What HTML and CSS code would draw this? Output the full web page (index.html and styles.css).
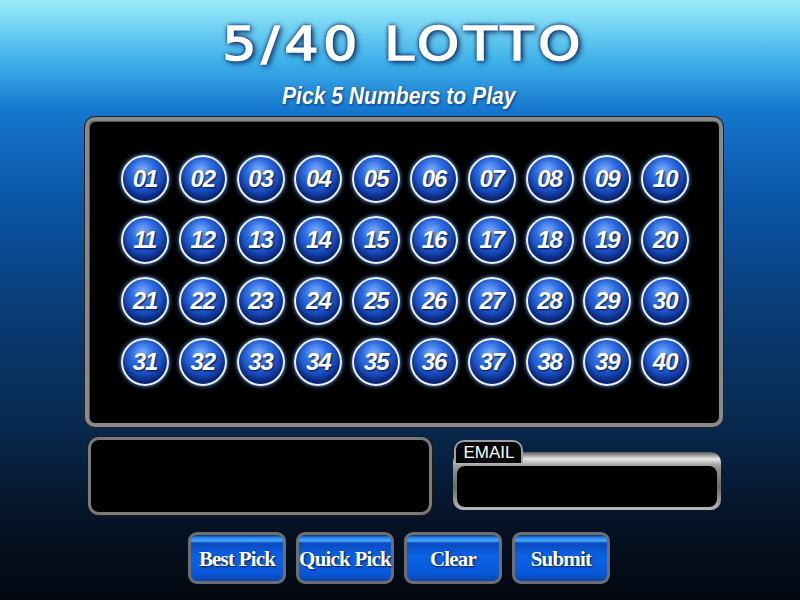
FILE: index.html
```html
<!DOCTYPE html>
<html lang="en">
<head>
    <meta charset="UTF-8">
    <title>5/40 Lotto</title>
    <link rel="stylesheet" href="styles.css">
</head>
<body>

<div class="page">
    <h1 class="title">5/40 LOTTO</h1>
    <h2 class="subtitle">Pick 5 Numbers to Play</h2>

    <!-- Number board -->
    <div class="board">
        <div id="balls" class="balls"></div>
    </div>

    <!-- Picks and email -->
    <div class="lower">
        <div class="picks"></div>
        <div class="email">
            <span class="email-tab">EMAIL</span>
            <div class="email-frame">
                <input type="text" class="email-input">
            </div>
        </div>
    </div>

    <!-- Buttons -->
    <div class="buttons">
        <button class="btn">Best Pick</button>
        <button class="btn">Quick Pick</button>
        <button class="btn">Clear</button>
        <button class="btn">Submit</button>
    </div>
</div>

<script>
    // Build the 40 number balls
    var balls = document.getElementById('balls');
    for (var i = 1; i <= 40; i++) {
        var b = document.createElement('div');
        b.className = 'ball';
        b.textContent = (i < 10 ? '0' : '') + i;
        b.onclick = function() { this.classList.toggle('picked'); };
        balls.appendChild(b);
    }
</script>

</body>
</html>
```

FILE: styles.css
```css
html, body {
    margin: 0;
    height: 100%;
}

body {
    font-family: "Liberation Sans", Arial, sans-serif;
    background: linear-gradient(to bottom, #9cecfa 0px, #3fb2ea 60px, #1677cf 110px, #0b55a6 200px, #0a3a72 320px, #082a50 420px, #061326 520px, #040810 600px);
    overflow: hidden;
}

.page {
    width: 800px;
    height: 600px;
    box-sizing: border-box;
    padding-left: 8px;
    display: flex;
    flex-direction: column;
    align-items: center;
}

/* Title */
.title {
    margin: 16px 0 0 0;
    height: 56px;
    font-family: "DejaVu Sans", sans-serif;
    font-weight: normal;
    font-size: 47px;
    letter-spacing: 4px;
    color: #fff;
    transform: scaleX(1.15);
    -webkit-text-stroke: 1.5px #fff;
    text-shadow: 0 0 2px #062a6a, 0 0 3px #062a6a, 0 0 5px #0a2e70, 2px 2px 6px #041c4a;
}

.subtitle {
    margin: 10px 0 0 -10px;
    font-size: 24px;
    font-style: italic;
    font-weight: bold;
    color: #fff;
    transform: scaleX(0.88);
    text-shadow: 1px 1px 3px #063070;
}

/* Board */
.board {
    margin-top: 7px;
    width: 638px;
    height: 310px;
    box-sizing: border-box;
    border: 4px solid #8a8a8a;
    border-radius: 10px;
    background: #000;
    box-shadow: 0 0 0 1px #222, inset 1px 1px 0 #555;
    padding: 34px 0 0 32px;
}

.balls {
    display: grid;
    grid-template-columns: repeat(10, 48px);
    column-gap: 9.8px;
    row-gap: 13px;
}

.ball {
    width: 48px;
    height: 48px;
    box-sizing: border-box;
    border-radius: 50%;
    border: 2px solid #e8f0ff;
    background: radial-gradient(circle at 45% 30%, #7fb0ff 0%, #2c6ae0 30%, #1548b8 60%, #0a2a80 100%);
    box-shadow: 0 0 4px #6aa0ff, inset 0 -4px 6px #0a2066;
    color: #fff;
    font-weight: bold;
    font-style: italic;
    font-size: 24px;
    letter-spacing: -1px;
    display: flex;
    align-items: center;
    justify-content: center;
    text-shadow: 1px 1px 2px #021038;
    cursor: pointer;
}

.ball.picked {
    background: radial-gradient(circle at 45% 30%, #ffe080 0%, #e0a020 50%, #905000 100%);
}

/* Lower row */
.lower {
    margin-top: 10px;
    width: 633px;
    display: flex;
    justify-content: space-between;
}

.picks {
    width: 344px;
    height: 78px;
    box-sizing: border-box;
    border: 3px solid #7a7a7a;
    border-radius: 11px;
    background: #000;
    box-shadow: 0 0 0 1px #1a1a1a;
}

.email {
    width: 268px;
    margin-top: 3px;
    display: flex;
    flex-direction: column;
    align-items: flex-start;
}

.email-tab {
    position: relative;
    z-index: 1;
    margin-left: 1px;
    height: 21px;
    padding: 0 6px 0 8px;
    background: #050505;
    border: 2px solid #a0a0a0;
    border-bottom: none;
    border-radius: 10px 10px 0 0;
    color: #fff;
    font-size: 17px;
    line-height: 22px;
}

.email-frame {
    width: 100%;
    box-sizing: border-box;
    margin-top: -11px;
    padding: 14px 4px 3px 4px;
    border-radius: 10px;
    background: linear-gradient(to bottom, #5a5a5a 0%, #e8e8e8 12%, #9a9a9a 24%, #6a6a6a 60%, #b8b8b8 100%);
}

.email-input {
    display: block;
    width: 100%;
    height: 41px;
    box-sizing: border-box;
    border: none;
    border-radius: 8px;
    background: #000;
    color: #fff;
    outline: none;
}

/* Buttons */
.buttons {
    margin: 17px 10px 0 0;
    display: flex;
    gap: 10px;
}

.btn {
    width: 98px;
    height: 52px;
    box-sizing: border-box;
    border: 3px solid #6e6e6e;
    border-radius: 9px;
    background: linear-gradient(to bottom, #0a3070 0px, #2a8cf0 3px, #48a8ff 6px, #0a4ac0 8px, #0b62e6 22px, #0858d8 38px, #0a3c9c 50px);
    color: #fff;
    font-family: "Liberation Serif", "Times New Roman", serif;
    font-weight: bold;
    font-size: 21px;
    letter-spacing: -0.8px;
    white-space: nowrap;
    padding: 3px 0 0 0;
    text-shadow: 1px 1px 2px #031640;
    cursor: pointer;
}
```
